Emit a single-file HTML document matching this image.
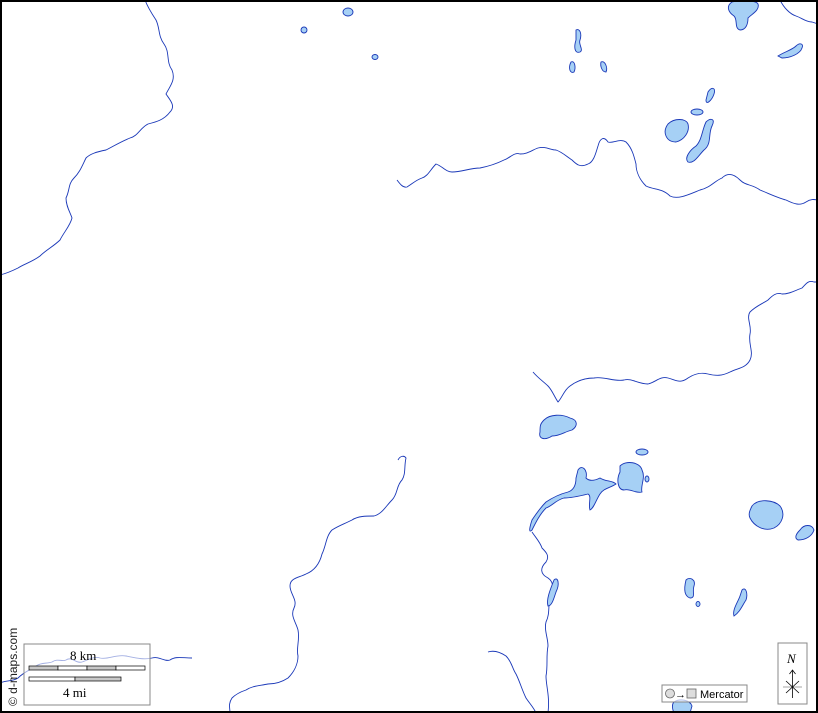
<!DOCTYPE html>
<html><head><meta charset="utf-8"><style>
html,body{margin:0;padding:0;background:#fff}
svg{display:block}
text{font-family:"Liberation Serif",serif}
</style></head><body>
<svg width="818" height="713" viewBox="0 0 818 713" xmlns="http://www.w3.org/2000/svg">
<rect x="0" y="0" width="818" height="713" fill="#fff"/>
<g fill="none" stroke="#1a38b8" stroke-width="0.9" stroke-linejoin="round">
<path d="M145,0 C148,8 152,14 156,20 C160,28 158,36 164,44 C170,52 166,62 172,70 C176,80 170,86 166,94 C170,100 176,106 170,112 C164,120 156,122 148,124 C140,128 138,136 130,138 C120,142 114,146 106,150 C96,152 90,154 86,158 C82,166 80,172 74,178 C68,184 70,190 66,198 C66,206 70,212 72,218 C70,226 64,232 60,240 C54,246 46,250 40,256 C32,262 24,264 18,268 C10,272 4,274 0,275"/>
<path d="M397,180 C400,184 403,188 407,187 C412,184 416,180 422,178 C428,176 430,170 436,164 C442,166 446,172 452,172 C462,172 470,168 480,168 C490,166 496,164 504,160 C510,158 514,152 520,154 C528,154 532,150 538,148 C546,146 550,150 556,150 C562,152 566,156 572,160 C576,164 580,168 588,164 C594,162 596,152 598,146 C600,138 604,136 608,142 C612,144 620,138 626,142 C632,148 634,156 636,164 C636,172 640,180 646,186 C654,190 662,188 670,196 C678,200 690,194 700,190 C710,188 716,180 722,178 C728,172 734,174 740,180 C746,186 752,184 760,190 C770,194 778,198 786,200 C794,204 800,206 806,202 C812,198 816,200 818,200"/>
<path d="M780,0 C784,8 790,14 796,16 C802,18 806,22 812,22 L818,24"/>
<path d="M533,372 C538,378 544,382 548,386 C552,390 554,396 558,402 C562,398 564,390 570,386 C578,380 586,378 594,378 C604,376 614,382 624,380 C632,378 638,384 648,384 C656,382 660,376 668,378 C676,380 680,384 688,378 C694,374 700,372 708,374 C716,376 722,376 730,372 C738,368 746,368 750,360 C754,352 748,344 750,334 C752,326 746,318 750,312 C756,306 762,304 768,300 C772,296 776,292 782,294 C790,294 796,290 802,288 C806,284 808,280 814,282 L818,282"/>
<path d="M398,460 C400,456 404,455 406,458 C404,466 406,474 402,480 C396,486 398,494 392,500 C386,506 382,514 374,516 C366,516 358,516 352,520 C344,524 338,526 332,530 C326,536 326,546 322,554 C320,562 316,570 306,574 C298,578 290,578 290,586 C290,594 298,600 294,608 C290,616 296,622 298,630 C300,640 296,648 298,656 C298,664 294,672 288,678 C282,682 276,684 268,684 C258,686 252,686 246,690 C240,692 236,694 232,698 C228,704 230,708 230,713"/>
<path d="M532,532 C536,538 540,542 542,548 C546,552 550,556 546,562 C540,568 540,574 548,578 C554,582 554,590 550,598 C548,606 550,614 546,622 C544,630 548,638 548,646 C546,656 548,666 546,676 C546,686 550,696 548,713"/>
<path d="M488,652 C494,650 500,652 506,656 C512,662 512,668 516,674 C520,682 522,690 526,698 C530,704 534,708 536,713"/>
<path d="M0,683 C6,680 12,682 18,678 C24,672 30,670 36,666 C42,662 46,664 52,662 C58,658 62,662 66,660 C72,656 76,664 82,662 C88,660 94,656 100,658 C108,660 116,654 126,656 C136,658 144,660 152,658 C160,656 164,662 170,660 C176,656 182,658 192,658"/>
</g>
<g fill="#a6d0f5" stroke="#1a38b8" stroke-width="0.9">
<ellipse cx="348" cy="12" rx="5" ry="4"/>
<ellipse cx="304" cy="30" rx="3" ry="3"/>
<ellipse cx="375" cy="57" rx="3" ry="2.5"/>
<path d="M732,2 C740,0 756,0 758,4 C760,10 752,14 748,18 C748,24 746,30 740,30 C734,28 738,20 734,16 C728,12 726,6 732,2 Z"/>
<path d="M778,56 C784,52 792,50 796,46 C800,42 804,44 802,48 C800,54 790,58 782,58 Z"/>
<path d="M576,30 C580,28 582,34 580,40 C578,44 584,50 580,52 C574,54 574,46 576,40 Z"/>
<path d="M571,62 C575,60 576,68 574,72 C570,74 568,68 571,62 Z"/>
<path d="M601,62 C605,60 608,68 606,72 C602,72 600,66 601,62 Z"/>
<path d="M668,124 C674,118 686,118 688,124 C690,132 684,140 676,142 C666,142 662,132 668,124 Z"/>
<ellipse cx="697" cy="112" rx="6" ry="3"/>
<path d="M708,92 C712,86 716,88 714,94 C712,100 706,106 706,100 Z"/>
<path d="M706,122 C710,118 716,118 712,126 C708,134 712,144 704,150 C698,156 694,164 688,162 C684,158 690,150 696,146 C702,140 702,130 706,122 Z"/>
<path d="M544,420 C550,414 562,414 570,418 C578,420 578,426 572,430 C564,432 560,436 552,436 C546,440 538,440 540,432 C540,426 540,424 544,420 Z"/>
<ellipse cx="642" cy="452" rx="6" ry="3"/>
<path d="M620,466 C626,460 640,462 642,470 C646,478 640,486 642,492 C636,494 630,488 624,490 C618,490 616,480 620,472 Z"/>
<path d="M578,470 C582,464 588,470 586,478 C590,482 596,480 600,478 C606,482 612,480 616,484 C610,488 604,488 600,494 C596,500 594,508 590,510 C588,504 592,496 588,494 C580,496 572,498 564,498 C556,500 552,506 546,508 C540,514 536,522 532,530 C528,534 530,526 532,520 C536,514 540,508 546,502 C552,498 560,494 568,492 C574,490 576,484 576,478 Z"/>
<ellipse cx="647" cy="479" rx="2" ry="3"/>
<path d="M752,506 C758,498 774,500 780,506 C786,514 782,524 774,528 C764,532 754,526 750,518 C748,514 750,510 752,506 Z"/>
<path d="M800,530 C804,524 812,524 814,530 C812,536 806,540 798,540 C794,538 796,534 800,530 Z"/>
<path d="M686,580 C690,576 696,580 694,586 C692,592 696,598 690,598 C684,596 684,588 686,580 Z"/>
<ellipse cx="698" cy="604" rx="2" ry="2.5"/>
<path d="M742,590 C746,586 748,594 746,600 C742,606 740,612 734,616 C732,610 738,602 740,596 Z"/>
<path d="M554,580 C558,576 560,584 556,592 C554,598 552,606 548,606 C546,600 550,590 554,580 Z"/>
<path d="M674,702 C680,698 690,700 692,706 L690,713 L674,713 C672,708 672,704 674,702 Z"/>
</g>
<rect x="1" y="1" width="816" height="711" fill="none" stroke="#000" stroke-width="2"/>
<text x="17" y="706" transform="rotate(-90 17 706)" font-size="12" fill="#222" style="font-family:'Liberation Sans',sans-serif">© d-maps.com</text>
<rect x="24" y="644" width="126" height="61" fill="#fff" fill-opacity="0.6" stroke="#888" stroke-width="1"/>
<text x="70" y="660" font-size="13" fill="#000">8 km</text>
<rect x="29" y="666" width="29" height="4" fill="#c8c8c8" stroke="#000" stroke-width="0.7"/>
<rect x="58" y="666" width="29" height="4" fill="#fff" stroke="#000" stroke-width="0.7"/>
<rect x="87" y="666" width="29" height="4" fill="#c8c8c8" stroke="#000" stroke-width="0.7"/>
<rect x="116" y="666" width="29" height="4" fill="#fff" stroke="#000" stroke-width="0.7"/>
<rect x="29" y="677" width="46" height="4" fill="#fff" stroke="#000" stroke-width="0.7"/>
<rect x="75" y="677" width="46" height="4" fill="#c8c8c8" stroke="#000" stroke-width="0.7"/>
<text x="63" y="697" font-size="13" fill="#000">4 mi</text>
<rect x="662" y="685" width="85" height="17" fill="#fff" fill-opacity="0.7" stroke="#888" stroke-width="1"/>
<circle cx="670" cy="693.5" r="4.5" fill="#ddd" stroke="#666" stroke-width="0.8"/>
<text x="675" y="698" font-size="11" fill="#000" style="font-family:'Liberation Sans',sans-serif">→</text>
<rect x="687" y="689" width="9" height="9" fill="#ddd" stroke="#666" stroke-width="0.8"/>
<text x="700" y="698" font-size="11" fill="#000" style="font-family:'Liberation Sans',sans-serif">Mercator</text>
<rect x="778" y="643" width="29" height="61" fill="#fff" stroke="#888" stroke-width="1"/>
<text x="787" y="663" font-size="13" font-style="italic" fill="#000">N</text>
<g stroke="#000" stroke-width="0.8" fill="none">
<line x1="792.5" y1="670" x2="792.5" y2="698"/>
<path d="M789.5,674 L792.5,670 L795.5,674"/>
<line x1="783" y1="687" x2="802" y2="687" stroke="#888"/>
<line x1="786" y1="681" x2="799" y2="693"/>
<line x1="799" y1="681" x2="786" y2="693"/>
</g>
</svg>
</body></html>
